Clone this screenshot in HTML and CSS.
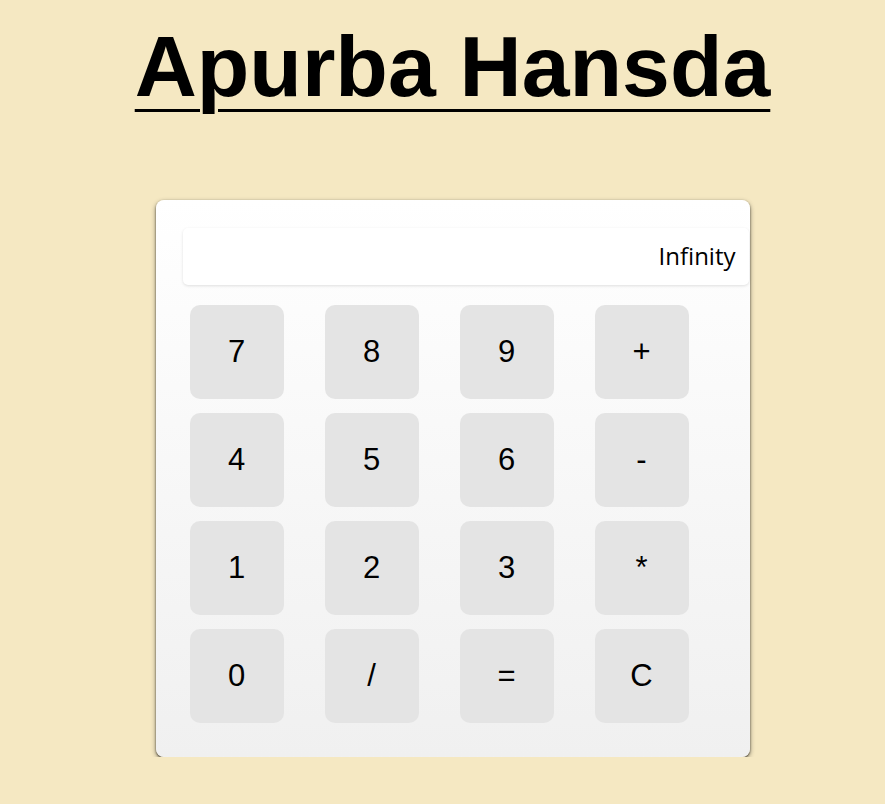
FILE: index.html
```html
<!DOCTYPE html>
<html>
<head>
<meta charset="utf-8">
<link rel="stylesheet" href="styles.css">
</head>
<body>
<h1 class="title">Apurba Hansda</h1>
<div class="calc">
  <div class="display">Infinity</div>
  <div class="keys">
    <button class="key">7</button>
    <button class="key">8</button>
    <button class="key">9</button>
    <button class="key">+</button>
    <button class="key">4</button>
    <button class="key">5</button>
    <button class="key">6</button>
    <button class="key">-</button>
    <button class="key">1</button>
    <button class="key">2</button>
    <button class="key">3</button>
    <button class="key">*</button>
    <button class="key">0</button>
    <button class="key">/</button>
    <button class="key">=</button>
    <button class="key">C</button>
  </div>
</div>
</body>
</html>
```

FILE: styles.css
```css
html, body {
  margin: 0;
  padding: 0;
}
body {
  background: #f5e8c2;
  padding-left: 20px;
  font-family: "Liberation Sans", Arial, sans-serif;
  color: #000;
}
.title {
  margin: 17px 0 0;
  text-align: center;
  font-size: 86px;
  font-weight: bold;
  line-height: 99px;
  text-decoration: underline;
  text-decoration-thickness: 3px;
  text-underline-offset: 13px;
}
.calc {
  box-sizing: border-box;
  width: 594px;
  height: 557px;
  margin: 84px auto 0;
  padding: 28px 0 0 27px;
  border-radius: 8px;
  background: linear-gradient(to bottom, #ffffff, #f0f0f0);
  box-shadow: 0 1px 2px rgba(0, 0, 0, 0.6), 0 2px 5px rgba(0, 0, 0, 0.45);
}
.display {
  box-sizing: border-box;
  width: 566px;
  height: 57px;
  padding: 0 13px 2px 0;
  border-radius: 5px;
  background: #fff;
  box-shadow: 0 1px 3px rgba(0, 0, 0, 0.12);
  display: flex;
  align-items: center;
  justify-content: flex-end;
  font-family: "Open Sans", "Noto Sans", sans-serif;
  font-size: 24px;
}
.keys {
  margin: 20px 0 0 7px;
  display: grid;
  grid-template-columns: repeat(4, 94px);
  grid-auto-rows: 94px;
  column-gap: 41px;
  row-gap: 14px;
}
.key {
  border: none;
  border-radius: 10px;
  background: #e4e4e4;
  font-family: "Liberation Sans", Arial, sans-serif;
  font-size: 31px;
  color: #000;
  padding: 0;
}
```
